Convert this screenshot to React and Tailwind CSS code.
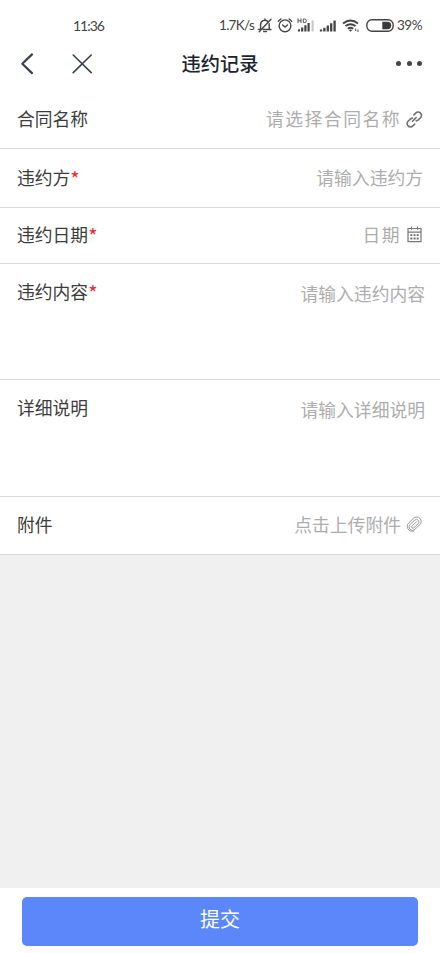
import React, { useState } from 'react';

const BellOffIcon = () => (
  <svg className="ml-[2px] h-4 w-4 shrink-0" viewBox="0 0 16 16" fill="none" stroke="#444" strokeWidth="1.4" strokeLinecap="round" strokeLinejoin="round">
    <path d="M3.6 10.4V6.4a4.2 4.2 0 0 1 7-3.1M12.2 5.6v5.6M6 11.5h8M1.4 11.4h1.8M6.6 13.6h3M8 .9v1" />
    <path d="M14 1.2L2.2 13.8" />
  </svg>
);

const AlarmIcon = () => (
  <svg className="ml-[4px] h-4 w-4 shrink-0" viewBox="0 0 16 16" fill="none" stroke="#444" strokeWidth="1.4" strokeLinecap="round" strokeLinejoin="round">
    <circle cx="8" cy="7.8" r="5.9" />
    <path d="M5.6 7L8 9l2.5-2M1.3 3.2l2.6-2.2M14.7 3.2l-2.6-2.2" />
  </svg>
);

const HdSignalIcon = () => (
  <svg className="ml-[4px] h-4 w-[18px] shrink-0" viewBox="0 0 18 16" fill="none">
    <path d="M1 .5v4.6M4 .5v4.6M1 2.8h3M6.3 1v3.6h1.3q1.8 0 1.8-1.8t-1.8-1.8z" stroke="#555" strokeWidth="1" />
    <path d="M2 11.2v2.2M5.2 9.4v4M8.4 7.2v6.2M11.6 5v8.4" stroke="#444" strokeWidth="2.2" />
    <path d="M15.6 2.4v11" stroke="#c4c4c4" strokeWidth="2" />
  </svg>
);

const SignalIcon = () => (
  <svg className="ml-[4px] h-4 w-[18px] shrink-0" viewBox="0 0 18 16" fill="none" stroke="#444" strokeWidth="2.3">
    <path d="M2 11.4v2M5.4 9.8v3.6M8.8 7.6v5.8M12.2 5.2v8.2M15.6 2.4v11" />
  </svg>
);

const WifiIcon = () => (
  <svg className="ml-[5px] h-4 w-[19px] shrink-0" viewBox="0 0 19 16" fill="none">
    <path d="M1 5.4q7.5-5.8 15 0M3.5 8.1q5-3.8 10 0M5.8 10.7q2.7-2.1 5.4 0" stroke="#444" strokeWidth="1.9" />
    <path d="M8.5 13.8l-1.8-1.8q1.8-1.2 3.6 0z" fill="#444" />
    <path d="M13.6 10.4v2.6M16 11.4v2.6" stroke="#666" strokeWidth="1.2" />
  </svg>
);

const BatteryIcon = () => (
  <svg className="ml-[5px] h-4 w-[28px] shrink-0" viewBox="0 0 28 16" fill="none">
    <rect x="0.8" y="1.8" width="26.4" height="11.4" rx="5.2" stroke="#444" strokeWidth="1.4" />
    <path d="M16.3 3.8h5.2a3.7 3.7 0 0 1 0 7.4h-5.2z" fill="#3a3a3a" />
  </svg>
);

const LinkIcon = () => (
  <svg className="h-[18px] w-[18px] shrink-0" viewBox="0 0 18 18" fill="none" stroke="#6f6f6f" strokeWidth="1.6" strokeLinecap="round">
    <path d="M8.9 4.9l1.8-1.8a3.3 3.3 0 0 1 4.8 0a3.3 3.3 0 0 1 0 4.7l-2.5 2.4a3.2 3.2 0 0 1-1.8.7" />
    <path d="M9.7 14.1l-1.8 1.8a3.3 3.3 0 0 1-4.8 0a3.3 3.3 0 0 1 0-4.7l2.5-2.4a3.2 3.2 0 0 1 1.8-.7" />
    <path d="M7.5 11.2l3.6-3.6" />
  </svg>
);

const CalendarIcon = () => (
  <svg className="h-[18px] w-[18px] shrink-0" viewBox="0 0 18 18" fill="none" stroke="#777" strokeWidth="1.2">
    <path d="M3 2.5h13v13.2H3zM3 6.2h13M6.5 .5v3.2M12.5 .5v3.2" />
    <path d="M5.4 9.2h1.9M8.6 9.2h1.9M11.7 9.2h1.9M5.4 12.5h1.9M8.6 12.5h1.9M11.7 12.5h1.9" stroke="#666" strokeWidth="1.8" />
  </svg>
);

const ClipIcon = () => (
  <svg className="h-[18px] w-[18px] shrink-0" viewBox="0 0 18 18" fill="none" stroke="#999" strokeWidth="1" strokeLinecap="round" strokeLinejoin="round">
    <path d="M11.3 6L7.1 9.9a1.3 1.3 0 0 0 1.8 1.9l4.3-4a2.5 2.5 0 0 0-3.5-3.6L5.1 8.5a3.4 3.4 0 0 0 0 4.9a3.4 3.4 0 0 0 4.7 0l5-4.7a4.4 4.4 0 0 0-6.2-6.4L3.9 6.7a5 5 0 0 0 0 7.4a4.6 4.6 0 0 0 5 .9" />
  </svg>
);

const rows = [
  { key: 'contract', label: '合同名称', placeholder: '请选择合同名称', icon: LinkIcon, height: 'h-[59px]', align: 'items-center', field: 'pr-[4px] tracking-[1.5px]' },
  { key: 'party', label: '违约方', required: true, placeholder: '请输入违约方', height: 'h-[59px]', align: 'items-center', field: 'pr-0 tracking-normal' },
  { key: 'date', label: '违约日期', required: true, placeholder: '日期', icon: CalendarIcon, height: 'h-14', align: 'items-center pb-px', field: 'pr-[4px] tracking-[1.5px]' },
  { key: 'content', label: '违约内容', required: true, placeholder: '请输入违约内容', multiline: true, height: 'h-[116px]', align: 'items-start pt-[15px]' },
  { key: 'detail', label: '详细说明', placeholder: '请输入详细说明', multiline: true, height: 'h-[117px]', align: 'items-start pt-[15px]' },
  { key: 'file', label: '附件', placeholder: '点击上传附件', icon: ClipIcon, height: 'h-[58px]', align: 'items-center pb-px', field: 'pr-[4px] tracking-normal' }
];

const FormRow = ({ row, value, onChange }) => {
  const Icon = row.icon;

  return (
    <div className={`flex border-b border-[#d9d9d9] bg-white pl-[17px] ${row.height} ${row.align} ${row.multiline ? 'pr-[15px]' : 'pr-[17px]'}`}>
      <label htmlFor={row.key} className={`flex h-6 shrink-0 leading-6 text-[#3c3c3c] ${row.multiline ? '' : 'mb-[2px]'}`}>
        {row.label}
        {row.required && <span className="pt-[2px] text-[20px] text-[#f5222d]">*</span>}
      </label>
      {row.multiline ? (
        <textarea
          id={row.key}
          value={value}
          onChange={onChange}
          placeholder={row.placeholder}
          className="mt-[2px] h-20 min-w-0 flex-1 resize-none text-right leading-6 outline-none placeholder:text-[#adadad]"
        />
      ) : (
        <input
          id={row.key}
          value={value}
          onChange={onChange}
          placeholder={row.placeholder}
          className={`mb-[2px] h-6 min-w-0 flex-1 text-right outline-none placeholder:text-[#adadad] ${row.field}`}
        />
      )}
      {Icon && <Icon />}
    </div>
  );
};

const App = () => {
  const [form, setForm] = useState({});

  return (
    <div className="flex h-[953px] w-[440px] flex-col bg-[#f0f0f0] font-['Noto_Sans_CJK_SC',sans-serif] text-[17.8px]">
      {/* 状态栏 */}
      <div className="flex h-[42px] shrink-0 items-center bg-white pl-[73px] pt-[9px] font-['Lato','Noto_Sans_CJK_SC',sans-serif] text-[14px] text-[#444]">
        <span className="w-[146px] tracking-[-1px]">11:36</span>
        <span className="w-[36px] whitespace-nowrap text-[13.5px] tracking-[-0.7px]">1.7K/s</span>
        <BellOffIcon />
        <AlarmIcon />
        <HdSignalIcon />
        <SignalIcon />
        <WifiIcon />
        <BatteryIcon />
        <span className="ml-[3px] text-[13.5px] tracking-[-0.5px]">39%</span>
      </div>

      {/* 标题栏 */}
      <div className="grid h-12 shrink-0 grid-cols-3 items-center bg-white pb-[5px]">
        <div className="flex items-center gap-[37px] pl-[19px]">
          <svg className="h-6 w-4" viewBox="0 0 16 24" fill="none" stroke="#38404a" strokeWidth="2.2" strokeLinecap="round" strokeLinejoin="round">
            <path d="M13 2.4L3.3 11.8l9.7 9.3" />
          </svg>
          <svg className="h-5 w-5" viewBox="0 0 20 20" fill="none" stroke="#38404a" strokeWidth="1.6" strokeLinecap="round">
            <path d="M1.2 1l18 17.6M19.2 1l-18 17.6" />
          </svg>
        </div>
        <h1 className="text-center text-[19.2px] font-medium text-[#1b2430]">违约记录</h1>
        <div className="flex justify-end gap-[5.5px] pr-[18px]">
          <i className="h-[5px] w-[5px] rounded-full bg-[#454545]" />
          <i className="h-[5px] w-[5px] rounded-full bg-[#454545]" />
          <i className="h-[5px] w-[5px] rounded-full bg-[#454545]" />
        </div>
      </div>

      {/* 表单 */}
      {rows.map((row) => (
        <FormRow
          key={row.key}
          row={row}
          value={form[row.key] || ''}
          onChange={(e) => setForm({ ...form, [row.key]: e.target.value })}
        />
      ))}

      {/* 提交 */}
      <div className="mt-auto h-[65px] shrink-0 bg-white px-[22px] pt-[9px]">
        <button type="button" className="h-[49px] w-full rounded-[5px] bg-[#5c87fb] pb-[5px] text-[20px] text-white">
          提交
        </button>
      </div>
    </div>
  );
};

export default App;
